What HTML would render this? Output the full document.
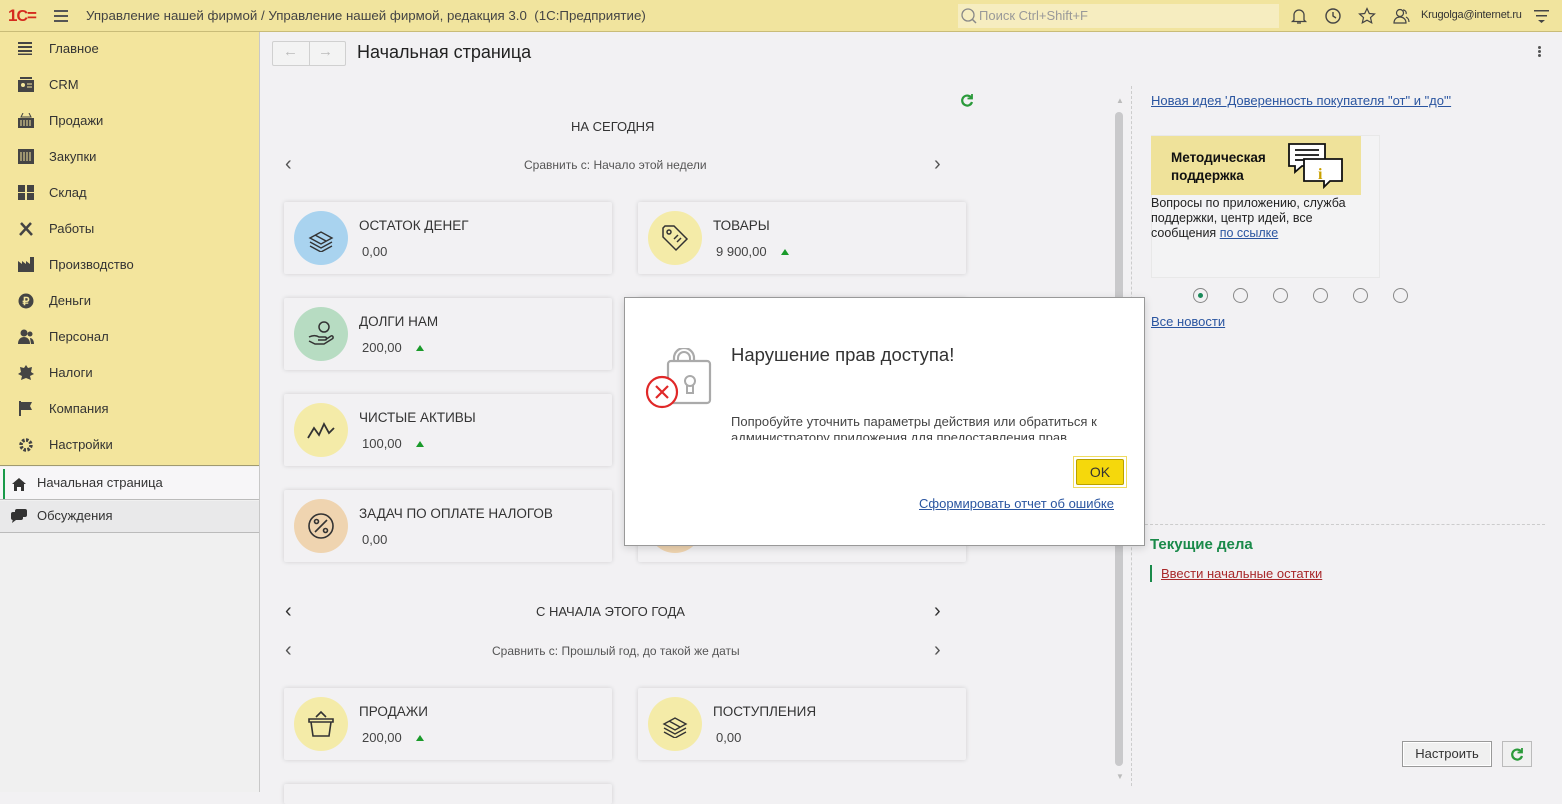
<!DOCTYPE html>
<html><head><meta charset="utf-8">
<style>
*{box-sizing:border-box;margin:0;padding:0}
body{width:1562px;height:792px;overflow:hidden;font-family:"Liberation Sans",sans-serif;background:#f2f1f3;position:relative;color:#333}
.abs{position:absolute}
#top{left:0;top:0;width:1562px;height:32px;background:#f1e49e;border-bottom:1px solid #c9bc78}
#side{left:0;top:32px;width:260px;height:760px;background:#f0f0f0;border-right:1px solid #c8c8c8}
#sideY{left:0;top:0;width:259px;height:434px;background:#f3e59d;border-bottom:1px solid #a09a70}
.si{position:absolute;left:0;height:36px;width:259px;font-size:13px;color:#333;line-height:36px;padding-left:49px}
.si svg{position:absolute;left:18px;top:10px}
.card{position:absolute;width:328px;height:72px;background:#f2f1f3;box-shadow:0 0 5px rgba(0,0,0,.14);border-radius:2px}
.card .c{position:absolute;left:10px;top:9px;width:54px;height:54px;border-radius:50%}
.card .c svg{position:absolute;left:13px;top:13px}
.card .t{position:absolute;left:75px;top:16px;font-size:13.5px;color:#333}
.card .v{position:absolute;left:78px;top:42px;font-size:13px;color:#444}
.tri{display:inline-block;width:0;height:0;border-left:4px solid transparent;border-right:4px solid transparent;border-bottom:6px solid #1a9a2a;margin-left:14px;vertical-align:1px}
a{color:#2a55a0;text-decoration:underline}
.dot{position:absolute;top:288px;width:15px;height:15px;border:1px solid #888;border-radius:50%}
</style></head><body>

<div id="top" class="abs">
  <div class="abs" style="left:8px;top:6px;font:bold 17px 'Liberation Sans';color:#d52b1e;letter-spacing:-1px">1<span style="font-size:16px">C</span>=</div>
  <div class="abs" style="left:54px;top:10px;width:14px;height:2px;background:#555;box-shadow:0 5px 0 #555,0 10px 0 #555"></div>
  <div class="abs" style="left:86px;top:8px;font-size:13.3px;color:#444">Управление нашей фирмой / Управление нашей фирмой, редакция 3.0&nbsp;&nbsp;(1С:Предприятие)</div>
  <div class="abs" style="left:958px;top:4px;width:321px;height:24px;background:#f6edc0"></div>
  <svg class="abs" style="left:960px;top:7px" width="18" height="18"><circle cx="8" cy="8" r="6" fill="none" stroke="#888" stroke-width="1.3"/><path d="M12 12l4 4" stroke="#888" stroke-width="1.5"/></svg>
  <div class="abs" style="left:979px;top:8px;font-size:13px;color:#999">Поиск Ctrl+Shift+F</div>
  <svg class="abs" style="left:1290px;top:7px" width="18" height="18" fill="none" stroke="#444" stroke-width="1.3"><path d="M4 13V8a5 5 0 0110 0v5l1.5 1.5h-13z M7 16h4"/></svg>
  <svg class="abs" style="left:1324px;top:7px" width="18" height="18" fill="none" stroke="#444" stroke-width="1.4"><circle cx="9" cy="9" r="7"/><path d="M9 5v4l3 2"/></svg>
  <svg class="abs" style="left:1358px;top:7px" width="18" height="18" fill="none" stroke="#444" stroke-width="1.2"><path d="M9 1.5l2.3 5 5.2.5-4 3.6 1.2 5.2L9 13.2l-4.7 2.6 1.2-5.2-4-3.6 5.2-.5z"/></svg>
  <svg class="abs" style="left:1392px;top:7px" width="18" height="18" fill="none" stroke="#444" stroke-width="1.2"><circle cx="8" cy="6" r="3.5"/><path d="M2 16c0-4 3-6 6-6s6 2 6 6z M11 3a3 3 0 013 4 M14 10c2 1 3 3 3 5"/></svg>
  <div class="abs" style="left:1421px;top:9px;font-size:11px;color:#333;letter-spacing:-0.2px">Krugolga@internet.ru</div>
  <svg class="abs" style="left:1534px;top:10px" width="16" height="14" fill="#444"><rect x="0" y="0" width="15" height="1.5"/><rect x="2" y="5" width="11" height="1.5"/><path d="M4 10h7l-3.5 3z"/></svg>
</div>

<div id="side" class="abs">
  <div id="sideY" class="abs">
    <div class="si" style="top:-1px"><svg width="14" height="14"><path d="M0 2h14M0 6h14M0 10h14M0 13.5h14" stroke="#444" stroke-width="2"/></svg>Главное</div>
    <div class="si" style="top:35px"><svg width="16" height="15"><rect x="0" y="3" width="16" height="12" fill="#444"/><rect x="2" y="0" width="12" height="2" fill="#444"/><circle cx="5" cy="8" r="2" fill="#f3e59d"/><path d="M9 7h5M9 10h5" stroke="#f3e59d"/></svg>CRM</div>
    <div class="si" style="top:71px"><svg width="16" height="15"><path d="M5 0L3 4h10L11 0" fill="none" stroke="#444"/><rect x="0" y="5" width="16" height="10" fill="#444"/><path d="M3 7v6M6 7v6M9 7v6M12 7v6" stroke="#f3e59d"/></svg>Продажи</div>
    <div class="si" style="top:107px"><svg width="16" height="15"><rect x="0" y="0" width="16" height="15" fill="#444"/><path d="M3 3v9M6 3v9M9 3v9M12 3v9" stroke="#f3e59d"/></svg>Закупки</div>
    <div class="si" style="top:143px"><svg width="16" height="15" fill="#444"><rect x="0" y="0" width="7" height="7"/><rect x="9" y="0" width="7" height="7"/><rect x="0" y="8" width="7" height="7"/><rect x="9" y="8" width="7" height="7"/></svg>Склад</div>
    <div class="si" style="top:179px"><svg width="16" height="15" stroke="#444" stroke-width="2.5"><path d="M2 14L13 2M3 2l11 12"/></svg>Работы</div>
    <div class="si" style="top:215px"><svg width="16" height="15" fill="#444"><path d="M0 15V4l4 3V4l4 3V4l4 3V0h4v15z"/></svg>Производство</div>
    <div class="si" style="top:251px"><svg width="16" height="16"><circle cx="8" cy="8" r="7.5" fill="#444"/><text x="4.5" y="12" font-size="11" font-weight="bold" fill="#f3e59d" font-family="Liberation Sans">₽</text></svg>Деньги</div>
    <div class="si" style="top:287px"><svg width="16" height="15" fill="#444"><circle cx="6" cy="4" r="3.5"/><path d="M0 15c0-5 3-7 6-7s6 2 6 7z"/><circle cx="12" cy="5" r="2.5"/><path d="M12 9c2 0 4 2 4 6h-3z"/></svg>Персонал</div>
    <div class="si" style="top:323px"><svg width="16" height="15" fill="#444"><path d="M8 0l2 3 4-1-1 5 3 2-4 2 1 4-5-2-5 2 1-4-4-2 3-2-1-5 4 1z"/></svg>Налоги</div>
    <div class="si" style="top:359px"><svg width="16" height="15" fill="#444"><rect x="1" y="0" width="2" height="15"/><path d="M3 1h11l-2 4 2 4H3z"/></svg>Компания</div>
    <div class="si" style="top:395px"><svg width="16" height="16"><circle cx="8" cy="8" r="5" fill="none" stroke="#444" stroke-width="3.5" stroke-dasharray="2.5 1.4"/><circle cx="8" cy="8" r="2" fill="#f3e59d"/></svg>Настройки</div>
  </div>
  <div class="abs" style="left:0;top:435px;width:259px;height:33px;background:#f7f6f8;border-bottom:1px solid #bbb"></div>
  <div class="abs" style="left:3px;top:437px;width:2px;height:30px;background:#1a9a4a"></div>
  <svg class="abs" style="left:12px;top:446px" width="14" height="13" fill="#333"><path d="M7 0l7 6h-2v7H9V9H5v4H2V6H0z"/></svg>
  <div class="abs" style="left:37px;top:443px;font-size:13px">Начальная страница</div>
  <div class="abs" style="left:0;top:469px;width:259px;height:32px;background:#e9e9ea;border-bottom:1px solid #bbb"></div>
  <svg class="abs" style="left:11px;top:477px" width="16" height="15" fill="#333"><rect x="0" y="3" width="12" height="8" rx="2"/><path d="M2 10l-1 4 4-3z"/><rect x="4" y="0" width="12" height="8" rx="2"/></svg>
  <div class="abs" style="left:37px;top:476px;font-size:13px">Обсуждения</div>
</div>

<!-- header -->
<div class="abs" style="left:272px;top:41px;width:74px;height:25px;border:1px solid #d0d0d0;background:#f3f3f3;border-radius:2px"></div>
<div class="abs" style="left:309px;top:42px;width:1px;height:23px;background:#d0d0d0"></div>
<div class="abs" style="left:283px;top:43px;font-size:15px;color:#bbb">←</div>
<div class="abs" style="left:318px;top:43px;font-size:15px;color:#bbb">→</div>
<div class="abs" style="left:357px;top:42px;font-size:18px;color:#222">Начальная страница</div>
<div class="abs" style="left:1538px;top:46px;width:3px;height:3px;background:#555;border-radius:50%;box-shadow:0 4px 0 #555,0 8px 0 #555"></div>

<svg class="abs" style="left:960px;top:93px" width="14" height="14" fill="none" stroke="#2a9a3a" stroke-width="2.2"><path d="M11.5 5A5 5 0 1 0 12 9"/><path d="M12 1v4.5H7.5" stroke-width="1.8"/></svg>

<div class="abs" style="left:571px;top:119px;font-size:13px;color:#333">НА СЕГОДНЯ</div>
<div class="abs" style="left:285px;top:153px;font-size:20px;color:#555">‹</div>
<div class="abs" style="left:934px;top:153px;font-size:20px;color:#555">›</div>
<div class="abs" style="left:524px;top:158px;font-size:12px;color:#555">Сравнить с: Начало этой недели</div>

<div class="card" style="left:284px;top:202px"><div class="c" style="background:#a9d3ef"><svg width="28" height="28" fill="none" stroke="#333" stroke-width="1.4"><path d="M3 14l11-6 11 6-11 6z M3 18l11 6 11-6 M3 22l11 6 11-6 M8 11l11 6"/></svg></div><div class="t">ОСТАТОК ДЕНЕГ</div><div class="v">0,00</div></div>
<div class="card" style="left:638px;top:202px"><div class="c" style="background:#f4eba8"><svg width="28" height="28" fill="none" stroke="#333" stroke-width="1.5"><path d="M2 4v9l13 13 11-11L13 2H4z"/><circle cx="8" cy="8" r="2"/><path d="M13 15l4-4M16 18l4-4"/></svg></div><div class="t">ТОВАРЫ</div><div class="v">9 900,00<span class="tri"></span></div></div>
<div class="card" style="left:284px;top:298px"><div class="c" style="background:#b7dcc2"><svg width="28" height="28" fill="none" stroke="#333" stroke-width="1.5"><circle cx="17" cy="7" r="5"/><path d="M2 17c4-2 7-2 10 0h6c2 0 2 3 0 3h-7 M18 20l6-4c2-1 3 2 1 3l-8 5H8l-6-3"/></svg></div><div class="t">ДОЛГИ НАМ</div><div class="v">200,00<span class="tri"></span></div></div>
<div class="card" style="left:638px;top:298px"></div>
<div class="card" style="left:284px;top:394px"><div class="c" style="background:#f4eba8"><svg width="28" height="28" fill="none" stroke="#333" stroke-width="1.8"><path d="M1 22l6-10 5 7 5-11 5 9 5-5"/></svg></div><div class="t">ЧИСТЫЕ АКТИВЫ</div><div class="v">100,00<span class="tri"></span></div></div>
<div class="card" style="left:638px;top:394px"></div>
<div class="card" style="left:284px;top:490px"><div class="c" style="background:#efd4b0"><svg width="28" height="28" fill="none" stroke="#333" stroke-width="1.6"><circle cx="14" cy="14" r="12"/><path d="M8 20L20 8"/><circle cx="9.5" cy="9.5" r="2"/><circle cx="18.5" cy="18.5" r="2"/></svg></div><div class="t">ЗАДАЧ ПО ОПЛАТЕ НАЛОГОВ</div><div class="v">0,00</div></div>
<div class="card" style="left:638px;top:490px"><div class="c" style="background:#efd4b0"></div></div>

<div class="abs" style="left:285px;top:600px;font-size:20px;color:#333">‹</div>
<div class="abs" style="left:934px;top:600px;font-size:20px;color:#333">›</div>
<div class="abs" style="left:536px;top:604px;font-size:13px;color:#333">С НАЧАЛА ЭТОГО ГОДА</div>
<div class="abs" style="left:285px;top:639px;font-size:20px;color:#555">‹</div>
<div class="abs" style="left:934px;top:639px;font-size:20px;color:#555">›</div>
<div class="abs" style="left:492px;top:644px;font-size:12px;color:#555">Сравнить с: Прошлый год, до такой же даты</div>

<div class="card" style="left:284px;top:688px"><div class="c" style="background:#f4eba8"><svg width="28" height="28" fill="none" stroke="#333" stroke-width="1.6"><path d="M9 7l5-5 5 5 M2 9h24v3H2z M4 12l2 14h16l2-14"/></svg></div><div class="t">ПРОДАЖИ</div><div class="v">200,00<span class="tri"></span></div></div>
<div class="card" style="left:638px;top:688px"><div class="c" style="background:#f4eba8"><svg width="28" height="28" fill="none" stroke="#333" stroke-width="1.4"><path d="M3 14l11-6 11 6-11 6z M3 18l11 6 11-6 M3 22l11 6 11-6 M8 11l11 6"/></svg></div><div class="t">ПОСТУПЛЕНИЯ</div><div class="v">0,00</div></div>
<div class="card" style="left:284px;top:784px;height:20px"></div>

<div class="abs" style="left:1116px;top:96px;font-size:8px;color:#bbb">▲</div>
<div class="abs" style="left:1115px;top:112px;width:8px;height:654px;background:#c9c9cb;border-radius:4px"></div>
<div class="abs" style="left:1116px;top:772px;font-size:8px;color:#bbb">▼</div>
<div class="abs" style="left:1131px;top:86px;width:0;height:700px;border-left:1px dashed #ccc"></div>

<a class="abs" style="left:1151px;top:93px;font-size:13px">Новая идея 'Доверенность покупателя "от" и "до"'</a>
<div class="abs" style="left:1151px;top:135px;width:229px;height:143px;background:#f3f3f4;border:1px solid #e8e8e8"></div>
<div class="abs" style="left:1151px;top:136px;width:210px;height:59px;background:#efe29a"></div>
<div class="abs" style="left:1171px;top:149px;font-size:13.5px;font-weight:bold;color:#111;line-height:18px">Методическая<br>поддержка</div>
<svg class="abs" style="left:1286px;top:141px" width="62" height="52" fill="#fff" stroke="#111" stroke-width="1.8"><path d="M3 3h36v22H16l-7 6v-6H3z"/><path d="M9 9h24M9 14h24M9 19h14" fill="none"/><path d="M18 18h38v22H44l-6 6v-6H18z"/><text x="32" y="38" font-size="16" font-weight="bold" fill="#c8a000" stroke="none" font-family="Liberation Serif">i</text></svg>
<div class="abs" style="left:1151px;top:196px;font-size:12.5px;color:#222;line-height:15px">Вопросы по приложению, служба<br>поддержки, центр идей, все<br>сообщения <a>по ссылке</a></div>
<div class="dot" style="left:1193px"><div style="width:5px;height:5px;background:#1a8a5a;border-radius:50%;margin:4px"></div></div>
<div class="dot" style="left:1233px"></div><div class="dot" style="left:1273px"></div><div class="dot" style="left:1313px"></div><div class="dot" style="left:1353px"></div><div class="dot" style="left:1393px"></div>
<a class="abs" style="left:1151px;top:314px;font-size:13px">Все новости</a>
<div class="abs" style="left:1145px;top:524px;width:400px;border-top:1px dashed #ccc"></div>
<div class="abs" style="left:1150px;top:536px;font-size:15px;font-weight:bold;color:#1a8a4a">Текущие дела</div>
<div class="abs" style="left:1150px;top:565px;width:2px;height:17px;background:#1a8a4a"></div>
<a class="abs" style="left:1161px;top:566px;font-size:13px;color:#a8282a">Ввести начальные остатки</a>
<div class="abs" style="left:1402px;top:741px;width:90px;height:26px;border:1px solid #999;background:#f0f0f0;font-size:13px;text-align:center;line-height:24px;box-shadow:inset 0 0 0 1px #fff">Настроить</div>
<div class="abs" style="left:1502px;top:741px;width:30px;height:26px;border:1px solid #bbb;background:#f0f0f0"></div>
<svg class="abs" style="left:1510px;top:747px" width="14" height="14" fill="none" stroke="#2a9a3a" stroke-width="2.2"><path d="M11.5 5A5 5 0 1 0 12 9"/><path d="M12 1v4.5H7.5" stroke-width="1.8"/></svg>

<div class="abs" style="left:624px;top:297px;width:521px;height:249px;background:#fff;border:1px solid #999;box-shadow:0 2px 8px rgba(0,0,0,.15)"></div>
<svg class="abs" style="left:644px;top:348px" width="70" height="62"><path d="M30 12v-2a10 10 0 0120 0v2" fill="none" stroke="#aaa" stroke-width="2.2"/><path d="M34 14v-4a6 6 0 0112 0v4" fill="none" stroke="#aaa" stroke-width="2"/><rect x="24" y="13" width="42" height="42" rx="3" fill="none" stroke="#aaa" stroke-width="2.2"/><circle cx="46" cy="33" r="5" fill="none" stroke="#aaa" stroke-width="2"/><path d="M43 37v8h6v-8" fill="none" stroke="#aaa" stroke-width="2"/><circle cx="18" cy="44" r="15" fill="#fff" stroke="#e02828" stroke-width="2.2"/><path d="M12 38l12 12M24 38L12 50" stroke="#e02828" stroke-width="2.2"/></svg>
<div class="abs" style="left:731px;top:344px;font-size:18.5px;color:#333">Нарушение прав доступа!</div>
<div class="abs" style="left:731px;top:414px;font-size:13px;color:#444;line-height:16px;height:26px;overflow:hidden">Попробуйте уточнить параметры действия или обратиться к<br>администратору приложения для предоставления прав</div>
<div class="abs" style="left:1073px;top:456px;width:54px;height:32px;border:1px solid #f0dc60"></div>
<div class="abs" style="left:1076px;top:459px;width:48px;height:26px;background:#f5d80c;border:1px solid #b8a000;border-radius:2px;font-size:14px;text-align:center;line-height:24px;color:#333">OK</div>
<a class="abs" style="left:919px;top:496px;font-size:13px">Сформировать отчет об ошибке</a>
</body></html>
